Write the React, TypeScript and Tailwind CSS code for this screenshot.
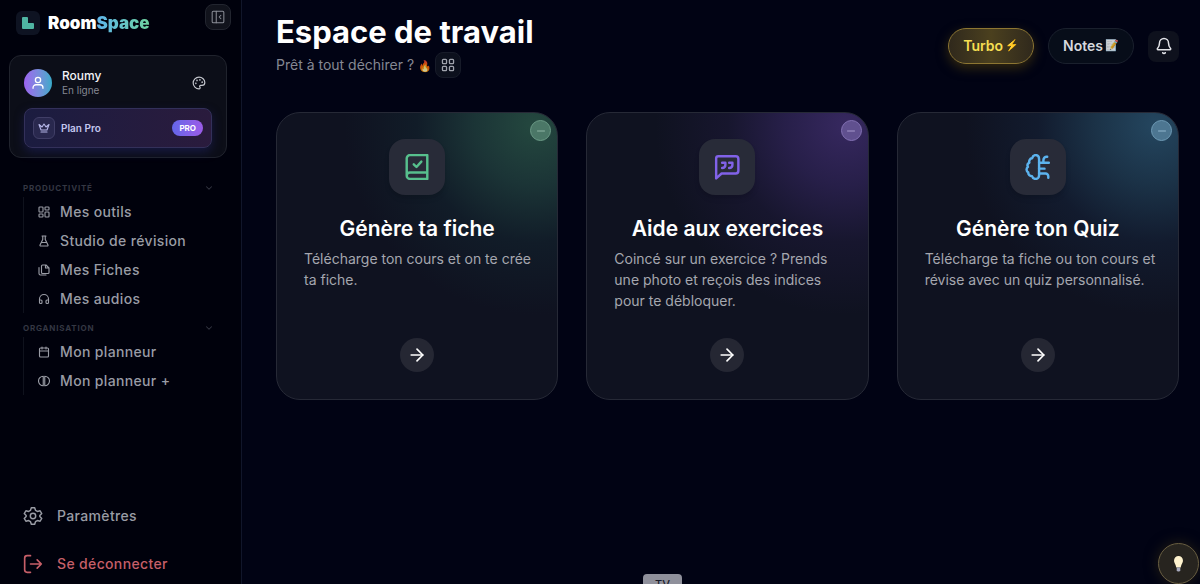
import type { ReactNode } from "react";
import {
  ArrowRight,
  Bell,
  Calendar,
  ChevronDown,
  Headphones,
  Minus,
  Palette,
} from "lucide-react";

type IconProps = { className?: string; children?: ReactNode };

function Icon({ className, children }: IconProps) {
  return (
    <svg
      viewBox="0 0 24 24"
      fill="none"
      stroke="currentColor"
      strokeWidth="2.25"
      strokeLinecap="round"
      strokeLinejoin="round"
      className={className}
      aria-hidden="true"
    >
      {children}
    </svg>
  );
}

const ToolsIcon = () => (
  <Icon className="size-3">
    <rect x="2" y="2" width="8" height="10" rx="1.5" />
    <rect x="14" y="2" width="8" height="6" rx="1.5" />
    <rect x="2" y="16" width="8" height="6" rx="1.5" />
    <rect x="14" y="12" width="8" height="10" rx="1.5" />
  </Icon>
);

const FlaskIcon = () => (
  <Icon className="size-3">
    <path d="M8 2h8M9.500 2v7L4 20a1.400 1.400 0 0 0 1.300 2h13.400a1.400 1.400 0 0 0 1.300-2L14.500 9V2M7 15h10" />
  </Icon>
);

const FilesIcon = () => (
  <Icon className="size-3">
    <path d="M16 2H9a2 2 0 0 0-2 2v13a2 2 0 0 0 2 2h11a2 2 0 0 0 2-2V8zM15 2v6h7M2 7v12a3 3 0 0 0 3 3h11" />
  </Icon>
);

const SplitCircleIcon = () => (
  <Icon className="size-3">
    <path d="M10.500 2.500a9.500 9.500 0 0 0 0 19zM13.500 2.500a9.500 9.500 0 0 1 0 19z" />
  </Icon>
);

const CrownIcon = () => (
  <Icon className="size-3">
    <path d="m2 5 4 11h12l4-11-6 5-4-6-4 6zM6 20h12" />
  </Icon>
);

const CollapseIcon = () => (
  <Icon className="size-3.5">
    <rect x="2" y="2" width="20" height="20" rx="2" strokeWidth="1.75" />
    <path d="M9 2v20M17 9l-3 3 3 3" strokeWidth="1.75" />
  </Icon>
);

const GearIcon = () => (
  <Icon className="size-5">
    <path
      strokeWidth="1.75"
      d="M10 2h4l1 3.200 2.200 1.300 3.300-.8 2 3.400L20.200 11.500v1l2.300 2.400-2 3.400-3.300-.8L15 18.800 14 22h-4l-1-3.200-2.200-1.300-3.300.8-2-3.400 2.300-2.400v-1L1.500 9.100l2-3.400 3.300.8L9 5.200z"
    />
    <circle cx="12" cy="12" r="3.250" strokeWidth="1.75" />
  </Icon>
);

const LogoutIcon = () => (
  <Icon className="size-5">
    <path d="M9 2H5a3 3 0 0 0-3 3v14a3 3 0 0 0 3 3h4M9 12h13M17 7l5 5-5 5" strokeWidth="2" />
  </Icon>
);

const BookIcon = () => (
  <Icon className="size-[26px] text-[#57c08d]">
    <path d="M21.500 17H5.500a3 3 0 0 0-3 2.500V4a3 3 0 0 1 3-3h16v22h-16a3 3 0 0 1 0-6" />
    <path d="m9 9.500 2.500 2.500 4.500-5" />
  </Icon>
);

const QuoteIcon = () => (
  <Icon className="size-[26px] text-[#8162e8]">
    <path d="M4 2h16a2.500 2.500 0 0 1 2.500 2.500v11A2.500 2.500 0 0 1 20 18H7l-5 4.500V4a2 2 0 0 1 2-2z" />
    <path d="M7.500 8h3v2c0 2-1 3-3 3M14 8h3v2c0 2-1 3-3 3" />
  </Icon>
);

const BrainIcon = () => (
  <Icon className="size-[26px] text-[#5cb3ee]">
    <path d="M13 4.500C13 2.500 11.700 1 10 1S7 2.300 6.500 4C4.500 4.200 3.500 6 4 8c-1.700.8-2 2.500-1.300 4C1 13 1 16 3 17c-.2 2.200 1.500 3.500 3.500 3.500C7 22.300 8.500 23 10 23s3-1.500 3-3.500z" />
    <path d="M13 8h9M17 8V5.500a3 3 0 0 1 3-3M13 13.500h5M13 18h6a2.500 2.500 0 0 1 2.500 2.500v1.500M19.500 2.500h1" />
  </Icon>
);

const sections = [
  {
    title: "PRODUCTIVITÉ",
    items: [
      { label: "Mes outils", icon: <ToolsIcon /> },
      { label: "Studio de révision", icon: <FlaskIcon /> },
      { label: "Mes Fiches", icon: <FilesIcon /> },
      { label: "Mes audios", icon: <Headphones className="size-3" strokeWidth={2.25} /> },
    ],
  },
  {
    title: "ORGANISATION",
    items: [
      { label: "Mon planneur", icon: <Calendar className="size-3" strokeWidth={2.25} /> },
      { label: "Mon planneur +", icon: <SplitCircleIcon /> },
    ],
  },
];

const cards = [
  {
    title: "Génère ta fiche",
    text: "Télécharge ton cours et on te crée ta fiche.",
    icon: <BookIcon />,
    glow: "bg-[radial-gradient(circle_190px_at_92%_4%,#24483f_0%,#1b3436_32%,#111c28_62%,#0f1220_100%)]",
    badge: "border-[#6b9a86] bg-[#4b7767] text-[#8fb5a5]",
  },
  {
    title: "Aide aux exercices",
    text: "Coincé sur un exercice ? Prends une photo et reçois des indices pour te débloquer.",
    icon: <QuoteIcon />,
    glow: "bg-[radial-gradient(circle_190px_at_92%_4%,#36285f_0%,#271f49_32%,#17162e_62%,#0f1220_100%)]",
    badge: "border-[#8371b4] bg-[#60508f] text-[#a597cb]",
  },
  {
    title: "Génère ton Quiz",
    text: "Télécharge ta fiche ou ton cours et révise avec un quiz personnalisé.",
    icon: <BrainIcon />,
    glow: "bg-[radial-gradient(circle_190px_at_92%_4%,#24465f_0%,#1b3247_32%,#121b2e_62%,#0f1220_100%)]",
    badge: "border-[#6e9ab5] bg-[#4d7691] text-[#91b6ce]",
  },
];

function SideNav() {
  return (
    <aside className="flex w-[242px] shrink-0 flex-col border-r border-[#11162a] bg-[#00010c]">
      <div className="flex items-start justify-between pt-1 pr-2.5 pl-4">
        <a href="#" className="flex items-center gap-2 pt-[7px]">
          <span className="flex size-6 items-center justify-center rounded-md bg-[#0e1322]">
            <svg viewBox="0 0 12 12" className="size-3" aria-hidden="true">
              <path d="M1 0h4a1 1 0 0 1 1 1v5h5a1 1 0 0 1 1 1v4a1 1 0 0 1-1 1H1a1 1 0 0 1-1-1V1a1 1 0 0 1 1-1z" fill="#4fb5a3" />
            </svg>
          </span>
          <span className="text-[17px] leading-6 font-black text-white">
            Room
            <span className="bg-linear-to-r from-[#5fb4ec] to-[#6fd39d] bg-clip-text text-transparent">
              Space
            </span>
          </span>
        </a>
        <button
          aria-label="Réduire le menu"
          className="flex size-[26px] items-center justify-center rounded-lg border border-[#22252f] bg-[#11131c] text-[#8c8f98]"
        >
          <CollapseIcon />
        </button>
      </div>

      <div className="mt-5 mr-3.5 ml-[9px] rounded-xl border border-[#20232d] bg-[#0c0e18] p-3.5 pt-3 pb-[9px]">
        <div className="flex items-center">
          <span className="flex size-7 items-center justify-center rounded-full bg-linear-to-r from-[#9b62ef] to-[#35aac9] text-white">
            <Icon className="size-3.5">
              <circle cx="12" cy="7" r="4.500" />
              <path d="M3.500 21v-1a5 5 0 0 1 5-5h7a5 5 0 0 1 5 5v1" />
            </Icon>
          </span>
          <div className="ml-2.5 flex-1">
            <p className="text-xs leading-[15px] font-medium text-[#f2f3f6]">Roumy</p>
            <p className="text-[10px] leading-[14px] text-[#858892]">En ligne</p>
          </div>
          <button aria-label="Thème" className="mr-1.5 text-[#c5c7ce]">
            <Palette className="size-3.5" strokeWidth={2} />
          </button>
        </div>
        <div className="mt-[11px] flex h-10 items-center rounded-lg border border-[#33305a] bg-linear-to-r from-[#1b1c40] to-[#2a1b3d] px-2 shadow-[0_4px_10px_#171940]">
          <span className="flex size-[22px] items-center justify-center rounded-md border border-[#403e66] bg-[#29284e] text-[#b5b6e8]">
            <CrownIcon />
          </span>
          <span className="ml-1.5 flex-1 text-[10px] font-semibold text-[#c3c6ee]">Plan Pro</span>
          <span className="flex h-4 items-center rounded-full bg-linear-to-r from-[#6366e8] to-[#9b5be8] px-[7px] text-[8px] font-bold text-white">
            PRO
          </span>
        </div>
      </div>

      <nav className="mt-6 flex flex-col gap-[9px] px-[23px]">
        {sections.map((section) => (
          <div key={section.title}>
            <button className="flex h-3 w-full items-center justify-between pr-1 text-[8px] font-bold tracking-widest text-[#343743]">
              {section.title}
              <ChevronDown className="size-2.5" strokeWidth={2.5} />
            </button>
            <ul className="mt-[3px] border-l border-[#0f121d]">
              {section.items.map((item) => (
                <li key={item.label}>
                  <a
                    href="#"
                    className="flex h-[29px] items-center gap-2.5 pl-3.5 text-sm font-medium tracking-wide text-[#999ca5]"
                  >
                    {item.icon}
                    {item.label}
                  </a>
                </li>
              ))}
            </ul>
          </div>
        ))}
      </nav>

      <div className="mt-auto flex flex-col gap-7 px-[23px] pb-2.5 text-sm font-medium tracking-wide">
        <a href="#" className="flex items-center gap-3.5 text-[#999ca5]">
          <GearIcon />
          Paramètres
        </a>
        <button className="flex items-center gap-3.5 text-[#c65f68]">
          <LogoutIcon />
          Se déconnecter
        </button>
      </div>
    </aside>
  );
}

function Header() {
  return (
    <header className="flex items-start justify-between">
      <div>
        <h1 className="text-[31px] leading-10 font-bold text-white">Espace de travail</h1>
        <div className="flex items-center gap-[3px]">
          <p className="text-sm text-[#858893]">
            Prêt à tout déchirer ? <span className="text-[11px] opacity-80">🔥</span>
          </p>
          <button
            aria-label="Affichage"
            className="flex size-[26px] items-center justify-center rounded-lg border border-[#171b29] bg-[#0c101d] text-[#a0a3ad]"
          >
            <Icon className="size-3.5">
              <rect x="2.500" y="2.500" width="7" height="7" rx="1.500" />
              <rect x="14.500" y="2.500" width="7" height="7" rx="1.500" />
              <rect x="2.500" y="14.500" width="7" height="7" rx="1.500" />
              <rect x="14.500" y="14.500" width="7" height="7" rx="1.500" />
            </Icon>
          </button>
        </div>
      </div>
      <div className="flex items-center gap-3.5 pt-4">
        <button className="flex h-9 items-center gap-0.5 rounded-full border border-[#8d7632] bg-linear-to-r from-[#30291c] via-[#4b401e] to-[#30291c] px-3.5 text-sm font-semibold text-[#f5de52] shadow-[0_4px_12px_#33290f]">
          Turbo <span className="text-[11px]">⚡</span>
        </button>
        <button className="flex h-9 items-center gap-0.5 rounded-full border border-[#1a202d] bg-[#070d19] px-3.5 text-sm font-semibold text-[#d6d8de]">
          Notes <span className="text-[11px] opacity-80">📝</span>
        </button>
        <button
          aria-label="Notifications"
          className="flex size-[31px] items-center justify-center rounded-lg bg-[#0e111d] text-[#e2e3e8]"
        >
          <Bell className="size-[18px]" />
        </button>
      </div>
    </header>
  );
}

export default function App() {
  return (
    <div className="flex min-h-screen bg-[#010314] font-['Inter',sans-serif]">
      <SideNav />
      <main className="flex-1 pt-3 pr-[21px] pl-[34px]">
        <Header />
        <section className="mt-[34px] grid grid-cols-3 gap-7">
          {cards.map((card) => (
            <article
              key={card.title}
              className={`relative flex min-h-72 flex-col items-center rounded-3xl border border-[#262936] pt-[26px] pb-[27px] ${card.glow}`}
            >
              <button
                aria-label="Retirer"
                className={`absolute top-[7px] right-1.5 flex size-[21px] items-center justify-center rounded-full border ${card.badge}`}
              >
                <Minus className="size-3" />
              </button>
              <span className="flex size-14 items-center justify-center rounded-2xl bg-[#282b38] shadow-md">
                {card.icon}
              </span>
              <h2 className="mt-5 text-[21px] leading-7 font-semibold text-white">{card.title}</h2>
              <p className="mt-[5px] w-full pr-5 pl-[27px] text-sm leading-[21px] text-[#a5a7af]">
                {card.text}
              </p>
              <button
                aria-label={card.title}
                className="mt-auto flex size-[34px] items-center justify-center rounded-full bg-[#252733] text-white"
              >
                <ArrowRight className="size-5" />
              </button>
            </article>
          ))}
        </section>
      </main>

      <div className="fixed bottom-0 left-[643px] h-2.5 w-[39px] overflow-hidden rounded-t-sm bg-[#8f909b] text-center text-[11px] leading-5 font-medium text-[#1b1d2b]">
        TV
      </div>
      <button
        aria-label="Astuce"
        className="fixed right-px bottom-0 flex size-[41px] items-center justify-center rounded-full border border-[#685e42] bg-[#27241f] shadow-[0_0_14px_#241e14]"
      >
        <svg viewBox="0 0 12 18" className="h-4 w-[11px]" aria-hidden="true">
          <path d="M6 0a5 5 0 0 0-5 5c0 3 2 4 2.500 8h5C9 9 11 8 11 5a5 5 0 0 0-5-5z" fill="#fff3cf" />
          <path d="M4 13h4v3l-1 1.500H5L4 16z" fill="#a7a9bd" />
        </svg>
      </button>
    </div>
  );
}
